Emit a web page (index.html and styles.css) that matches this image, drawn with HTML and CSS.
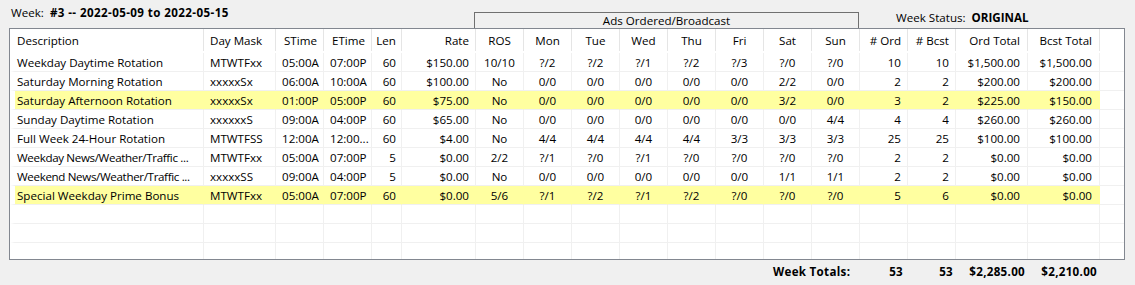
FILE: index.html
```html
<!DOCTYPE html>
<html>
<head>
<meta charset="utf-8">
<link rel="stylesheet" href="styles.css">
</head>
<body>
<div class="top">
  <div class="week">Week:&nbsp; <b class="wide">#3 -- 2022-05-09 to 2022-05-15</b></div>
  <div class="ads">Ads Ordered/Broadcast</div>
  <div class="status">Week Status:&nbsp; <b>ORIGINAL</b></div>
</div>
<div class="list">
  <div class="row head">
    <div class="c0">Description</div><div class="l">Day Mask</div><div class="lh">STime</div><div class="lh">ETime</div><div class="r5">Len</div><div class="r">Rate</div><div class="c">ROS</div><div class="c">Mon</div><div class="c">Tue</div><div class="c">Wed</div><div class="c">Thu</div><div class="c">Fri</div><div class="c">Sat</div><div class="c">Sun</div><div class="r">#&nbsp;Ord</div><div class="r">#&nbsp;Bcst</div><div class="r7">Ord Total</div><div class="r7">Bcst Total</div><div class="fill"></div>
  </div>
  <div class="row">
    <div class="c0">Weekday Daytime Rotation</div><div class="l">MTWTFxx</div><div class="l">05:00A</div><div class="l">07:00P</div><div class="r5">60</div><div class="r">$150.00</div><div class="c">10/10</div><div class="c">?/2</div><div class="c">?/2</div><div class="c">?/1</div><div class="c">?/2</div><div class="c">?/3</div><div class="c">?/0</div><div class="c">?/0</div><div class="r">10</div><div class="r">10</div><div class="r7">$1,500.00</div><div class="r7">$1,500.00</div><div class="fill"></div>
  </div>
  <div class="row">
    <div class="c0">Saturday Morning Rotation</div><div class="l">xxxxxSx</div><div class="l">06:00A</div><div class="l">10:00A</div><div class="r5">60</div><div class="r">$100.00</div><div class="c">No</div><div class="c">0/0</div><div class="c">0/0</div><div class="c">0/0</div><div class="c">0/0</div><div class="c">0/0</div><div class="c">2/2</div><div class="c">0/0</div><div class="r">2</div><div class="r">2</div><div class="r7">$200.00</div><div class="r7">$200.00</div><div class="fill"></div>
  </div>
  <div class="row hl">
    <div class="c0">Saturday Afternoon Rotation</div><div class="l">xxxxxSx</div><div class="l">01:00P</div><div class="l">05:00P</div><div class="r5">60</div><div class="r">$75.00</div><div class="c">No</div><div class="c">0/0</div><div class="c">0/0</div><div class="c">0/0</div><div class="c">0/0</div><div class="c">0/0</div><div class="c">3/2</div><div class="c">0/0</div><div class="r">3</div><div class="r">2</div><div class="r7">$225.00</div><div class="r7">$150.00</div><div class="fill"></div>
  </div>
  <div class="row">
    <div class="c0">Sunday Daytime Rotation</div><div class="l">xxxxxxS</div><div class="l">09:00A</div><div class="l">04:00P</div><div class="r5">60</div><div class="r">$65.00</div><div class="c">No</div><div class="c">0/0</div><div class="c">0/0</div><div class="c">0/0</div><div class="c">0/0</div><div class="c">0/0</div><div class="c">0/0</div><div class="c">4/4</div><div class="r">4</div><div class="r">4</div><div class="r7">$260.00</div><div class="r7">$260.00</div><div class="fill"></div>
  </div>
  <div class="row">
    <div class="c0">Full Week 24-Hour Rotation</div><div class="l">MTWTFSS</div><div class="l">12:00A</div><div class="l">12:00...</div><div class="r5">60</div><div class="r">$4.00</div><div class="c">No</div><div class="c">4/4</div><div class="c">4/4</div><div class="c">4/4</div><div class="c">4/4</div><div class="c">3/3</div><div class="c">3/3</div><div class="c">3/3</div><div class="r">25</div><div class="r">25</div><div class="r7">$100.00</div><div class="r7">$100.00</div><div class="fill"></div>
  </div>
  <div class="row">
    <div class="c0 tight">Weekday News/Weather/Traffic ...</div><div class="l">MTWTFxx</div><div class="l">05:00A</div><div class="l">07:00P</div><div class="r5">5</div><div class="r">$0.00</div><div class="c">2/2</div><div class="c">?/1</div><div class="c">?/0</div><div class="c">?/1</div><div class="c">?/0</div><div class="c">?/0</div><div class="c">?/0</div><div class="c">?/0</div><div class="r">2</div><div class="r">2</div><div class="r7">$0.00</div><div class="r7">$0.00</div><div class="fill"></div>
  </div>
  <div class="row">
    <div class="c0 tight">Weekend News/Weather/Traffic ...</div><div class="l">xxxxxSS</div><div class="l">09:00A</div><div class="l">04:00P</div><div class="r5">5</div><div class="r">$0.00</div><div class="c">No</div><div class="c">0/0</div><div class="c">0/0</div><div class="c">0/0</div><div class="c">0/0</div><div class="c">0/0</div><div class="c">1/1</div><div class="c">1/1</div><div class="r">2</div><div class="r">2</div><div class="r7">$0.00</div><div class="r7">$0.00</div><div class="fill"></div>
  </div>
  <div class="row hl">
    <div class="c0">Special Weekday Prime Bonus</div><div class="l">MTWTFxx</div><div class="l">05:00A</div><div class="l">07:00P</div><div class="r5">60</div><div class="r">$0.00</div><div class="c">5/6</div><div class="c">?/1</div><div class="c">?/2</div><div class="c">?/1</div><div class="c">?/2</div><div class="c">?/0</div><div class="c">?/0</div><div class="c">?/0</div><div class="r">5</div><div class="r">6</div><div class="r7">$0.00</div><div class="r7">$0.00</div><div class="fill"></div>
  </div>
  <div class="row empty"><div class="c0"></div><div></div><div></div><div></div><div></div><div></div><div></div><div></div><div></div><div></div><div></div><div></div><div></div><div></div><div></div><div></div><div></div><div></div><div class="fill"></div></div>
  <div class="row empty"><div class="c0"></div><div></div><div></div><div></div><div></div><div></div><div></div><div></div><div></div><div></div><div></div><div></div><div></div><div></div><div></div><div></div><div></div><div></div><div class="fill"></div></div>
  <div class="row empty"><div class="c0"></div><div></div><div></div><div></div><div></div><div></div><div></div><div></div><div></div><div></div><div></div><div></div><div></div><div></div><div></div><div></div><div></div><div></div><div class="fill"></div></div>
</div>
<div class="totals">
  <div class="tlabel">Week Totals:</div>
  <div class="t1">53</div>
  <div class="t2">53</div>
  <div class="t3">$2,285.00</div>
  <div class="t3">$2,210.00</div>
</div>
</body>
</html>
```
FILE: styles.css
```css
html, body {
  margin: 0;
  padding: 0;
}
body {
  background: #f0f0f0;
  font-family: "Open Sans", "Noto Sans", sans-serif;
  font-size: 11.6px;
  color: #000;
  width: 1135px;
  height: 285px;
  overflow: hidden;
}
b { font-weight: 700; }
.wide { letter-spacing: 0.4px; }

.top {
  display: grid;
  grid-template-columns: 474px 385px 1fr;
  height: 28px;
}
.week {
  padding-left: 11px;
  padding-top: 4px;
  line-height: 17px;
  white-space: nowrap;
}
.ads {
  margin-top: 12px;
  height: 16px;
  box-sizing: border-box;
  border: 1px solid #707070;
  border-bottom: none;
  text-align: center;
  line-height: 15px;
}
.status {
  padding-left: 37px;
  padding-top: 9px;
  line-height: 17px;
  white-space: nowrap;
}

.list {
  margin-left: 9px;
  width: 1116px;
  height: 232px;
  box-sizing: border-box;
  border: 1px solid #828790;
  background: #fff;
  overflow: hidden;
}
.row {
  display: grid;
  grid-template-columns: 194px 72px 48px 48px 30px 74px 48px 48px 48px 48px 48px 48px 48px 48px 48px 48px 72px 72px 1fr;
  height: 19px;
}
.row > div {
  box-sizing: border-box;
  border-right: 1px solid #f0f0f0;
  border-bottom: 1px solid #f0f0f0;
  padding-top: 1px;
  line-height: 17px;
  white-space: nowrap;
  overflow: hidden;
}
.row > .fill { border-right: none; }
.row > .c0 {
  border-left: 5px solid #fff;
  padding-left: 2px;
}
.row > .tight { letter-spacing: -0.35px; }
.row.hl > div { background: #ffffa0; border-right-color: #ffffa0; }
.row.hl > .fill { background: #fff; }

.row.head { height: 24px; }
.row.head > div {
  height: 22px;
  border-bottom: none;
  border-right-color: #e5e5e5;
  padding-top: 1px;
  line-height: 21px;
}
.row.head > .fill { border-right: none; }

.l { padding-left: 6px; }
.lh { padding-left: 7px; }
.head .lh { padding-left: 8px; }
.r { text-align: right; padding-right: 6px; }
.r5 { text-align: right; padding-right: 5px; }
.r7 { text-align: right; padding-right: 7px; }
.c { text-align: center; }

.totals {
  display: flex;
  padding-left: 773px;
  font-weight: 700;
  letter-spacing: 0.3px;
  line-height: 17px;
  padding-top: 3px;
  white-space: nowrap;
}
.totals > div { box-sizing: border-box; text-align: right; }
.tlabel { width: 86px; text-align: left !important; }
.t1 { width: 48px; padding-right: 4px; }
.t2 { width: 48px; padding-right: 2px; }
.t3 { width: 72px; padding-right: 2px; }
```
